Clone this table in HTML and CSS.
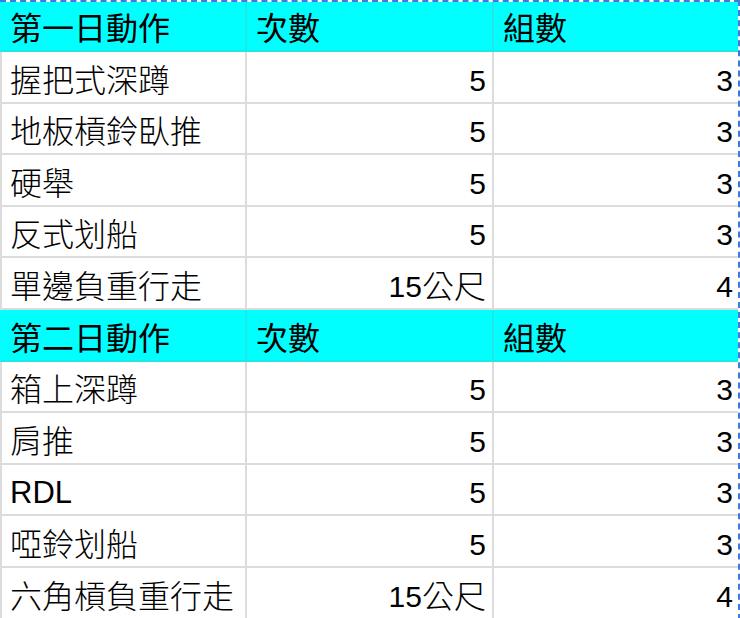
FILE: index.html
```html
<!DOCTYPE html>
<html lang="zh-Hant">
<head>
<meta charset="utf-8">
<title>訓練表</title>
<link rel="stylesheet" href="styles.css">
</head>
<body>
<div class="sheet">
  <div class="row head first"><div class="cell c1">第一日動作</div><div class="cell c2">次數</div><div class="cell c3">組數</div></div>
  <div class="row"><div class="cell c1">握把式深蹲</div><div class="cell c2 r"><span class="num">5</span></div><div class="cell c3 r"><span class="num">3</span></div></div>
  <div class="row"><div class="cell c1">地板槓鈴臥推</div><div class="cell c2 r"><span class="num">5</span></div><div class="cell c3 r"><span class="num">3</span></div></div>
  <div class="row"><div class="cell c1">硬舉</div><div class="cell c2 r"><span class="num">5</span></div><div class="cell c3 r"><span class="num">3</span></div></div>
  <div class="row"><div class="cell c1">反式划船</div><div class="cell c2 r"><span class="num">5</span></div><div class="cell c3 r"><span class="num">3</span></div></div>
  <div class="row"><div class="cell c1">單邊負重行走</div><div class="cell c2 r"><span class="num">15</span>公尺</div><div class="cell c3 r"><span class="num">4</span></div></div>
  <div class="row head"><div class="cell c1">第二日動作</div><div class="cell c2">次數</div><div class="cell c3">組數</div></div>
  <div class="row"><div class="cell c1">箱上深蹲</div><div class="cell c2 r"><span class="num">5</span></div><div class="cell c3 r"><span class="num">3</span></div></div>
  <div class="row"><div class="cell c1">肩推</div><div class="cell c2 r"><span class="num">5</span></div><div class="cell c3 r"><span class="num">3</span></div></div>
  <div class="row"><div class="cell c1"><span class="num latin">RDL</span></div><div class="cell c2 r"><span class="num">5</span></div><div class="cell c3 r"><span class="num">3</span></div></div>
  <div class="row"><div class="cell c1">啞鈴划船</div><div class="cell c2 r"><span class="num">5</span></div><div class="cell c3 r"><span class="num">3</span></div></div>
  <div class="row"><div class="cell c1">六角槓負重行走</div><div class="cell c2 r"><span class="num">15</span>公尺</div><div class="cell c3 r"><span class="num">4</span></div></div>
</div>
</body>
</html>
```

FILE: styles.css
```css
html, body {
  margin: 0;
  padding: 0;
  background: #ffffff;
  overflow: hidden;
}

.sheet {
  width: 738px;
  border-top: 2px dashed #3d7be0;
  border-right: 2px dashed #3d7be0;
  font-family: "Liberation Sans", "Noto Sans CJK TC", sans-serif;
  color: #000000;
}

.row {
  display: grid;
  grid-template-columns: 247px 247px 244px;
  height: 51.6px;
}

.row.first {
  height: 50px;
}

.cell {
  display: flex;
  align-items: flex-end;
  justify-content: flex-start;
  box-sizing: border-box;
  padding: 0 6px 3px 9px;
  font-size: 32px;
  line-height: 36px;
  font-weight: 300;
  border-bottom: 2px solid #dcdcdc;
  border-right: 2px solid #dcdcdc;
  white-space: nowrap;
}

.cell.c1 {
  border-left: 2px solid #dcdcdc;
  padding-left: 8px;
}

.cell.c3 {
  border-right: none;
  padding-right: 5px;
}

.cell.r {
  justify-content: flex-end;
}

.num {
  font-size: 30px;
  font-weight: 400;
}

.num.latin {
  font-size: 31px;
}

.head .cell {
  background: #00ffff;
  border-color: #20e6e6;
  font-weight: 400;
  color: #000000;
}

.head .cell.c1 {
  border-left-color: #00ffff;
}
```
